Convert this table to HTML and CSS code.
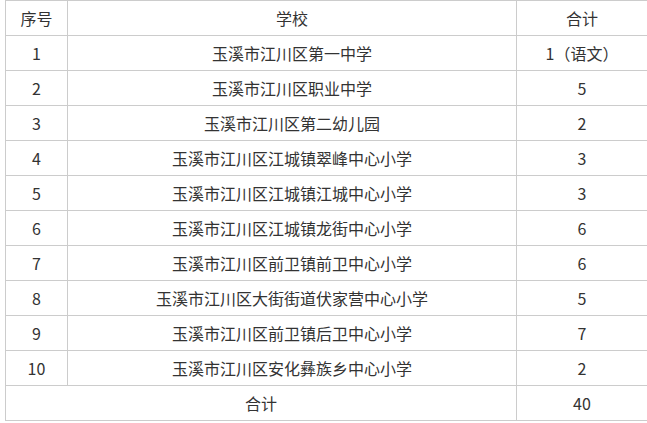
FILE: index.html
```html
<!DOCTYPE html>
<html lang="zh-CN">
<head>
<meta charset="utf-8">
<title>学校名单</title>
<link rel="stylesheet" href="styles.css">
</head>
<body>
<table class="tbl">
  <colgroup>
    <col class="c-no">
    <col class="c-school">
    <col class="c-total">
  </colgroup>
  <tr><td>序号</td><td>学校</td><td>合计</td></tr>
  <tr><td>1</td><td>玉溪市江川区第一中学</td><td>1（语文）</td></tr>
  <tr><td>2</td><td>玉溪市江川区职业中学</td><td>5</td></tr>
  <tr><td>3</td><td>玉溪市江川区第二幼儿园</td><td>2</td></tr>
  <tr><td>4</td><td>玉溪市江川区江城镇翠峰中心小学</td><td>3</td></tr>
  <tr><td>5</td><td>玉溪市江川区江城镇江城中心小学</td><td>3</td></tr>
  <tr><td>6</td><td>玉溪市江川区江城镇龙街中心小学</td><td>6</td></tr>
  <tr><td>7</td><td>玉溪市江川区前卫镇前卫中心小学</td><td>6</td></tr>
  <tr><td>8</td><td>玉溪市江川区大街街道伏家营中心小学</td><td>5</td></tr>
  <tr><td>9</td><td>玉溪市江川区前卫镇后卫中心小学</td><td>7</td></tr>
  <tr><td>10</td><td>玉溪市江川区安化彝族乡中心小学</td><td>2</td></tr>
  <tr><td colspan="2">合计</td><td>40</td></tr>
</table>
</body>
</html>
```
FILE: styles.css
```css
html, body {
  margin: 0;
  padding: 0;
  background: #fff;
}
body {
  padding-left: 5px;
  font-family: "Noto Sans CJK SC", "Noto Sans", sans-serif;
  font-size: 16px;
  color: #333;
}
.tbl {
  border-collapse: collapse;
  table-layout: fixed;
  width: 642px;
}
.c-no { width: 62px; }
.c-school { width: 449px; }
.c-total { width: 131px; }
.tbl td {
  border: 1px solid #cccccc;
  height: 34px;
  padding: 0;
  text-align: center;
  vertical-align: middle;
  line-height: 20px;
}
```
